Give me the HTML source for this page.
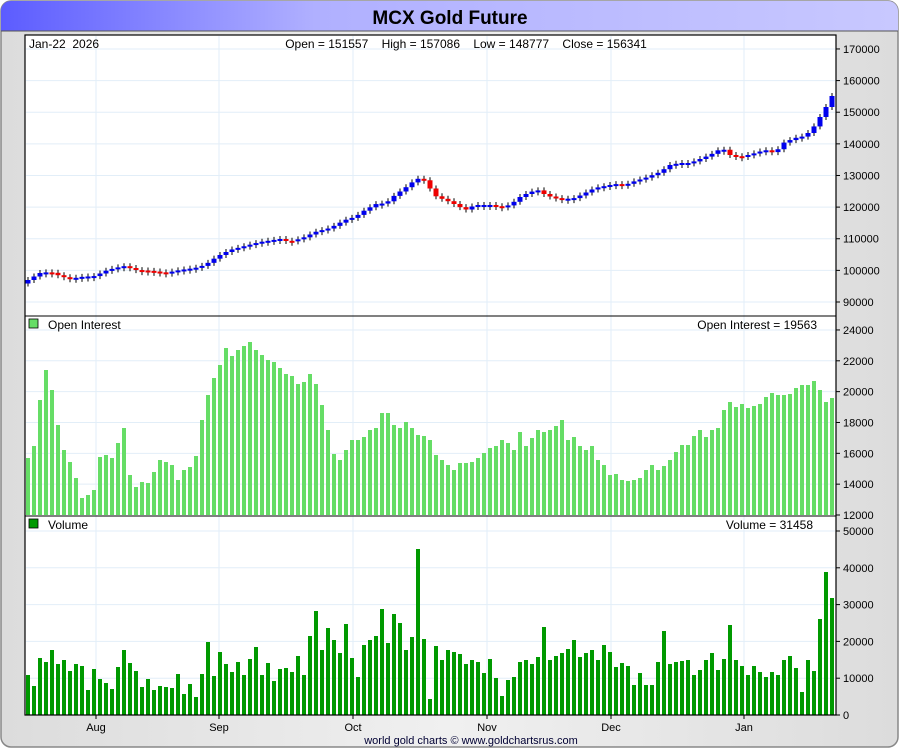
<!DOCTYPE html>
<html><head><meta charset="utf-8"><style>
html,body{margin:0;padding:0;background:#fff;}
body{width:900px;height:750px;overflow:hidden;font-family:"Liberation Sans",sans-serif;}
</style></head><body>
<svg id="s" width="900" height="750" xmlns="http://www.w3.org/2000/svg" font-family="Liberation Sans, sans-serif">
<defs>
<linearGradient id="hg" x1="0" x2="1" y1="0" y2="0">
<stop offset="0" stop-color="#5c5cff"/><stop offset="0.35" stop-color="#b0b0ff"/><stop offset="1" stop-color="#c8c8ff"/></linearGradient>
<linearGradient id="bg" x1="0" x2="1"><stop offset="0" stop-color="#dcdcdc"/><stop offset="0.5" stop-color="#f0f0f0"/><stop offset="1" stop-color="#dcdcdc"/></linearGradient>
</defs>
<rect x="1" y="1" width="897" height="746" rx="10" fill="url(#bg)" stroke="#888" stroke-width="1.5"/>
<path d="M1 31 V11 A10 10 0 0 1 11 1 H888 A10 10 0 0 1 898 11 V31 Z" fill="url(#hg)"/>
<line x1="1" y1="31" x2="898" y2="31" stroke="#555"/>
<text x="450" y="24" text-anchor="middle" font-size="19" font-weight="bold" fill="#000">MCX Gold Future</text>
<rect x="25" y="35" width="811" height="680" fill="#fff"/>
<g id="g"></g>
<rect x="25" y="35" width="811" height="680" fill="none" stroke="#000" stroke-width="1.2"/>
<line x1="25" y1="316" x2="836" y2="316" stroke="#000"/>
<line x1="25" y1="516" x2="836" y2="516" stroke="#000"/>
<text x="29" y="48" font-size="12" xml:space="preserve">Jan-22  2026</text>
<text x="466" y="48" font-size="12" text-anchor="middle" xml:space="preserve">Open = 151557    High = 157086    Low = 148777    Close = 156341</text>
<rect x="29" y="319" width="9" height="9" fill="#66dd66" stroke="#000" stroke-width="0.8"/>
<text x="48" y="329" font-size="12">Open Interest</text>
<text x="817" y="329" font-size="12" text-anchor="end">Open Interest = 19563</text>
<rect x="29" y="519" width="9" height="9" fill="#009900" stroke="#000" stroke-width="0.8"/>
<text x="48" y="529" font-size="12">Volume</text>
<text x="813" y="529" font-size="12" text-anchor="end">Volume = 31458</text>
<text x="471" y="744" font-size="11" text-anchor="middle" fill="#000033">world gold charts © www.goldchartsrus.com</text>
</svg>
<script>
(function(){
var g=document.getElementById('g'),h='';
function L(x1,y1,x2,y2,c,w){h+='<line x1="'+x1+'" y1="'+y1+'" x2="'+x2+'" y2="'+y2+'" stroke="'+c+'" stroke-width="'+(w||1)+'"/>';}
function R(x,y,w,hh,c){h+='<rect x="'+x+'" y="'+y+'" width="'+w+'" height="'+hh+'" fill="'+c+'"/>';}
function T(x,y,t,a){h+='<text x="'+x+'" y="'+y+'" font-size="11" text-anchor="'+(a||'start')+'">'+t+'</text>';}
var months=[[96,'Aug'],[219,'Sep'],[353,'Oct'],[487,'Nov'],[611,'Dec'],[744,'Jan']];
var gc='#e2eef8';
months.forEach(function(m){L(m[0],36,m[0],714,gc);L(m[0],715,m[0],719,'#000');T(m[0],731,m[1],'middle');});
var v,yy;
for(v=90000;v<=170000;v+=10000){yy=302-(v-90000)/1000*3.163;L(26,yy,835,yy,gc);L(836,yy,840,yy,'#000');T(843,yy+4,v);}
for(v=12000;v<=24000;v+=2000){yy=515-(v-12000)/1000*15.42;if(v>12000)L(26,yy,835,yy,gc);L(836,yy,840,yy,'#000');T(843,yy+4,v);}
for(v=0;v<=50000;v+=10000){yy=715-v/1000*3.68;if(v>0)L(26,yy,835,yy,gc);L(836,yy,840,yy,'#000');T(843,yy+4,v);}
var oi=[458,446,400,370,390,425,450,462,478,498,495,490,457,455,458,443,428,475,487,482,483,472,460,462,465,480,470,467,456,420,395,378,365,348,356,350,346,342,350,355,360,362,368,374,376,384,382,374,384,405,430,454,460,450,440,440,437,430,428,413,413,425,428,422,428,435,436,440,455,460,465,470,463,463,462,458,453,448,446,440,443,450,432,446,438,430,432,430,426,420,440,437,446,450,446,460,465,475,474,480,481,480,478,470,465,470,466,460,452,445,445,436,430,437,430,428,410,402,407,404,408,406,404,397,393,395,395,394,388,385,385,381,390,402,398];
oi.forEach(function(t,i){R(26+i*6,t,4,515-t,'#66dd66');});
var vo=[675,686,658,662,650,664,660,671,664,666,690,669,679,683,689,667,650,663,671,687,679,690,686,687,688,674,694,684,697,674,642,676,652,664,672,662,675,659,647,675,663,681,669,668,672,656,675,636,611,650,628,640,653,624,658,677,645,640,636,609,643,614,623,650,637,549,639,699,646,660,650,652,654,664,660,662,673,659,678,696,680,677,662,660,664,657,627,660,656,653,649,640,657,653,650,660,645,652,667,663,666,685,673,685,685,662,631,664,662,661,660,675,670,660,653,670,659,625,660,666,675,666,672,677,672,675,660,656,668,692,660,671,619,572,598];
vo.forEach(function(t,i){R(26+i*6,t,4,715-t,'#009900');});
var pk=[[28,280],[40,273],[50,272],[60,276],[70,279],[80,277],[95,276],[105,271],[115,268],[125,266],[135,270],[150,271],[165,273],[180,270],[195,268],[205,265],[212,260],[218,256],[230,250],[245,246],[260,242],[280,239],[290,242],[305,237],[315,232],[330,228],[345,220],[355,217],[365,210],[378,203],[385,204],[395,195],[405,188],[415,180],[420,178],[427,182],[433,195],[440,198],[450,202],[458,206],[465,210],[475,205],[490,205],[500,207],[510,205],[520,197],[530,192],[540,190],[545,195],[555,198],[565,199],[575,198],[585,193],[595,188],[605,186],[615,184],[625,185],[635,181],[645,178],[660,172],[670,165],[680,163],[690,163],[700,159],[710,155],[722,148],[730,155],[740,157],[752,154],[765,150],[775,153],[783,143],[795,138],[805,136],[813,128],[820,117],[826,107],[831,96]];
function py(x){for(var k=0;k<pk.length-1;k++){if(x<=pk[k+1][0]){var a=pk[k],b=pk[k+1];return a[1]+(b[1]-a[1])*(x-a[0])/(b[0]-a[0]);}}return pk[pk.length-1][1];}
var prev=py(22);
for(var i=0;i<135;i++){var x=28+i*6,c=py(x),o=prev;var col=c<=o?'#0000ee':'#ee0000';var tp=Math.min(o,c),bh=Math.max(Math.abs(c-o),2);
L(x,tp-3,x,tp+bh+3,'#000');R(x-2.5,tp,5,bh,col);prev=c;}
g.innerHTML=h;
})();
</script>
</body></html>
